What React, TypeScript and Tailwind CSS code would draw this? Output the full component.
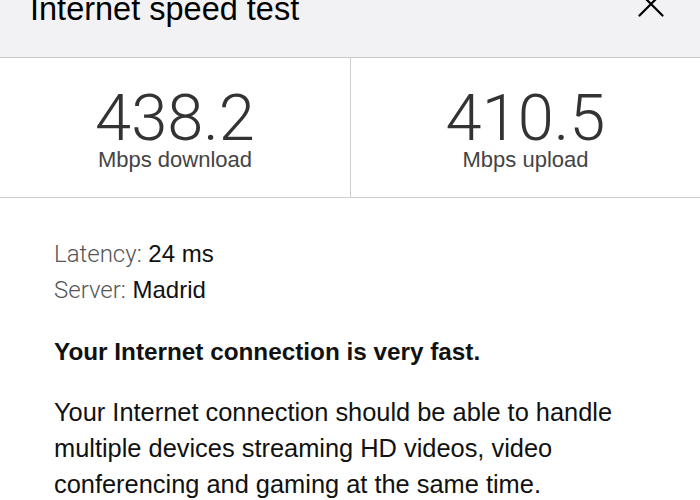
const stats = [
  { value: "438.2", label: "Mbps download" },
  { value: "410.5", label: "Mbps upload" },
];

export default function App() {
  return (
    <div className="w-[700px] h-[500px] overflow-hidden bg-white font-['Liberation_Sans',Arial,sans-serif] text-[#111]">
      {/* Header */}
      <header className="flex items-start justify-between h-[58px] bg-[#f2f2f4] border-b border-[#c9c9cb] pl-[30px] pr-[36px]">
        <h1 className="-mt-[7px] text-[32.5px] leading-[32px] text-black">Internet speed test</h1>
        <svg className="-mt-[9px]" width="26" height="26" viewBox="0 0 26 26" fill="none" stroke="black" strokeWidth="2.2" strokeLinecap="round">
          <path d="M1.5 1.5L24.5 24.5M24.5 1.5L1.5 24.5" />
        </svg>
      </header>

      {/* Speeds */}
      <div className="grid grid-cols-2 h-[140px] border-b border-[#cfcfcf]">
        {stats.map((s, i) => (
          <div
            key={s.label}
            className={`flex flex-col items-center pt-[29px] ${i === 1 ? "border-l border-[#cfcfcf]" : ""}`}
          >
            <div className="font-['Roboto',sans-serif] font-light text-[65px] leading-[62px] text-[#333]">
              {s.value}
            </div>
            <div className="text-[22px] leading-[22px] text-[#444]">{s.label}</div>
          </div>
        ))}
      </div>

      {/* Details */}
      <div className="pl-[54px] pr-[40px] pt-[38px]">
        <p className="text-[24px] leading-[36px]">
          <span className="font-['Roboto',sans-serif] font-light text-[#555]">Latency:</span> 24 ms
        </p>
        <p className="text-[24px] leading-[36px]">
          <span className="font-['Roboto',sans-serif] font-light text-[#555]">Server:</span> Madrid
        </p>
        <p className="mt-[26px] text-[24.3px] leading-[36px] font-bold">Your Internet connection is very fast.</p>
        <p className="mt-[24px] text-[25.4px] leading-[36px] max-w-[600px]">
          Your Internet connection should be able to handle multiple devices streaming HD videos, video
          conferencing and gaming at the same time.
        </p>
      </div>
    </div>
  );
}
